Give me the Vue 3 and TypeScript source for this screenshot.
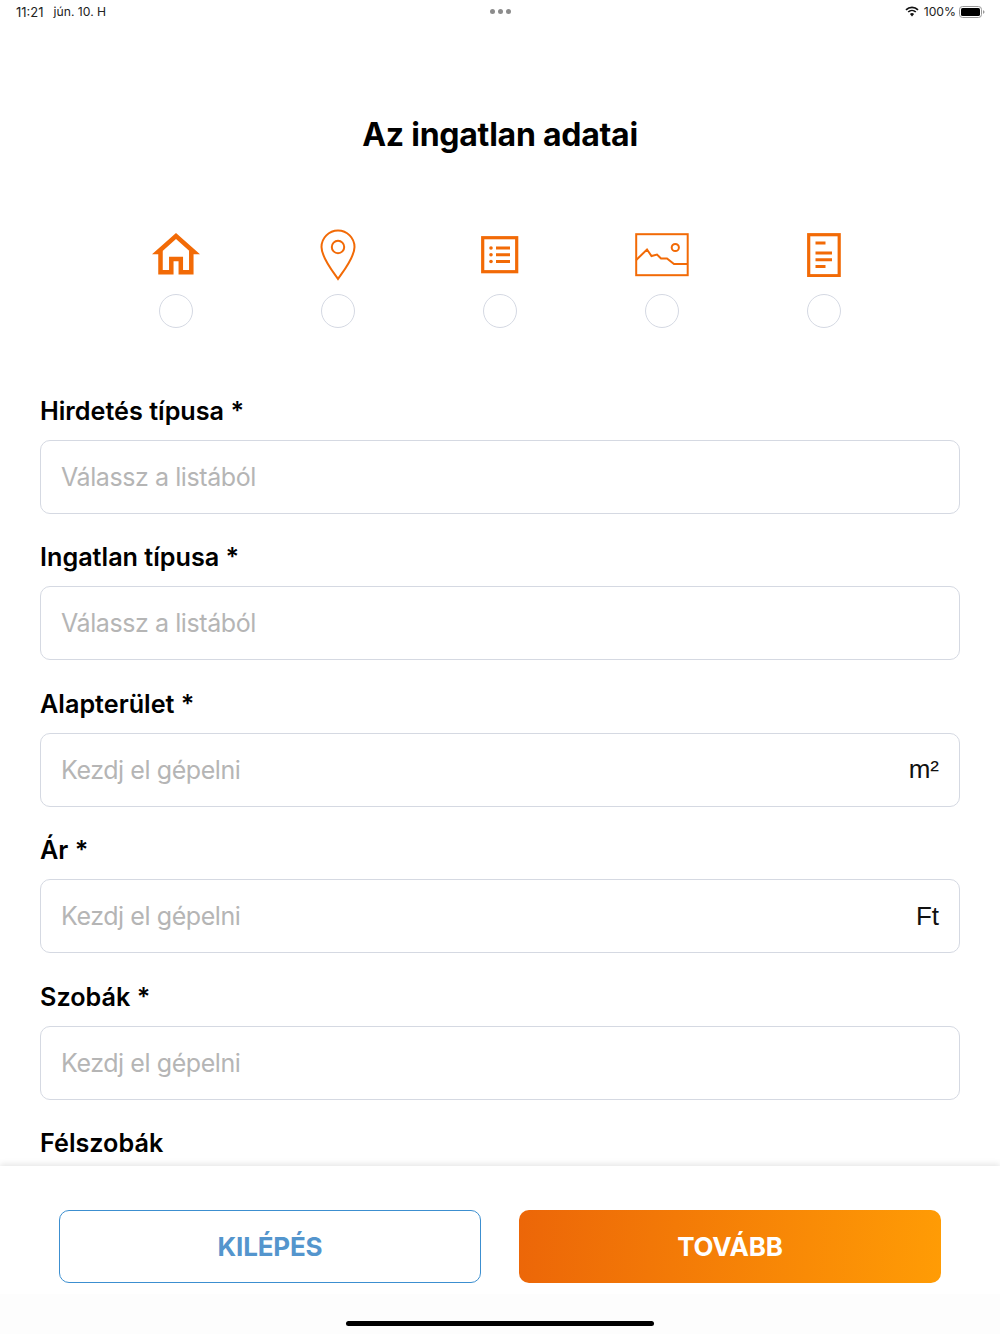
<template>
  <div class="page">
    <div class="status-bar">
      <div class="status-left">
        <span class="time">11:21</span>
        <span>jún. 10. H</span>
      </div>
      <div class="status-dots"><i></i><i></i><i></i></div>
      <div class="status-right">
        <svg class="wifi" width="14" height="11" viewBox="0 0 14 11">
          <path d="M1 3.8 A8.6 8.6 0 0 1 13 3.8" fill="none" stroke="#111" stroke-width="1.7" />
          <path d="M3.2 6 A5.5 5.5 0 0 1 10.8 6" fill="none" stroke="#111" stroke-width="1.7" />
          <path d="M7 10.6 L4.9 8.1 A3 3 0 0 1 9.1 8.1 Z" fill="#111" />
        </svg>
        <span class="percent">100%</span>
        <svg class="battery" width="26" height="12" viewBox="0 0 26 12">
          <rect x="0.5" y="0.5" width="22" height="11" rx="3" fill="none" stroke="#999" />
          <rect x="2" y="2" width="19" height="8" rx="1.6" fill="#000" />
          <path d="M24 4.2 C25 4.5 25.5 5.2 25.5 6 C25.5 6.8 25 7.5 24 7.8 Z" fill="#999" />
        </svg>
      </div>
    </div>

    <div class="scroll">
      <h1 class="title">Az ingatlan adatai</h1>

      <div class="steps">
        <div v-for="n in 5" :key="n" class="step">
          <div class="step-icon">
            <svg v-if="n === 1" class="home" width="48" height="42" viewBox="0 0 48 42" fill="none" stroke="#f26a06" stroke-width="4.5">
              <path d="M24 0 L48 21.3 H41 L24 6 L7 21.3 H0 Z" fill="#f26a06" stroke="none" />
              <path d="M8.5 18 V39.3 H19.3 V26 H28.8 V39.3 H39.3 V18" />
            </svg>
            <svg v-else-if="n === 2" width="36" height="52" viewBox="0 0 36 52" fill="none" stroke="#f26a06" stroke-width="2">
              <path d="M18 50 C14 44 1.5 29 1.5 18 A16.5 16.5 0 0 1 34.5 18 C34.5 29 22 44 18 50 Z" />
              <circle cx="18" cy="18" r="6.2" />
            </svg>
            <svg v-else-if="n === 3" width="38" height="38" viewBox="0 0 38 38" fill="none" stroke="#f26a06">
              <rect x="1.7" y="1.7" width="34" height="34" stroke-width="3.2" />
              <path d="M15 12 H29 M15 18.8 H29 M15 25.5 H29" stroke-width="3" />
              <circle cx="10" cy="12" r="1.8" fill="#f26a06" stroke="none" />
              <circle cx="10" cy="18.8" r="1.8" fill="#f26a06" stroke="none" />
              <circle cx="10" cy="25.5" r="1.8" fill="#f26a06" stroke="none" />
            </svg>
            <svg v-else-if="n === 4" width="54" height="44" viewBox="0 0 54 44" fill="none" stroke="#f26a06" stroke-width="2">
              <rect x="1.2" y="1.2" width="51.5" height="41" />
              <path d="M1.2 27 L12 16.5 L16.5 23 L22 21.5 L26 25.5 L32 25.5 L39 31 H52.7" />
              <circle cx="40.3" cy="14.5" r="3.6" />
            </svg>
            <svg v-else width="34" height="44" viewBox="0 0 34 44" fill="none" stroke="#f26a06">
              <rect x="1.7" y="1.7" width="30.5" height="41" stroke-width="3.2" />
              <path d="M8.5 10 H18.5 M8.5 20 H25 M8.5 26.7 H25 M8.5 33.5 H18.5" stroke-width="3" />
            </svg>
          </div>
          <span class="step-dot"></span>
        </div>
      </div>

      <div class="form">
        <div v-for="field in fields" :key="field.label" class="field">
          <label class="label">{{ field.label }}</label>
          <div v-if="field.placeholder" class="input">
            <span class="placeholder">{{ field.placeholder }}</span>
            <span v-if="field.unit" class="unit">{{ field.unit }}</span>
          </div>
        </div>
      </div>
    </div>

    <div class="footer">
      <div class="buttons">
        <button class="btn btn-exit">KILÉPÉS</button>
        <button class="btn btn-next">TOVÁBB</button>
      </div>
      <div class="home-area"><span class="home-bar"></span></div>
    </div>
  </div>
</template>

<script setup lang="ts">
interface IField {
  label: string
  placeholder?: string
  unit?: string
}

const fields: IField[] = [
  { label: 'Hirdetés típusa *', placeholder: 'Válassz a listából' },
  { label: 'Ingatlan típusa *', placeholder: 'Válassz a listából' },
  { label: 'Alapterület *', placeholder: 'Kezdj el gépelni', unit: 'm²' },
  { label: 'Ár *', placeholder: 'Kezdj el gépelni', unit: 'Ft' },
  { label: 'Szobák *', placeholder: 'Kezdj el gépelni' },
  { label: 'Félszobák' },
]
</script>

<style>
html,
body {
  margin: 0;
  background: #fff;
}
</style>

<style scoped>
.page {
  width: 1000px;
  height: 1334px;
  display: flex;
  flex-direction: column;
  overflow: hidden;
  background: #fff;
  font-family: Inter, 'Liberation Sans', sans-serif;
  color: #000;
}
.status-bar {
  height: 23px;
  flex: none;
  display: grid;
  grid-template-columns: 1fr auto 1fr;
  align-items: center;
  padding: 0 15px 0 16px;
  font-size: 12.2px;
  color: #222;
}
.status-left {
  display: flex;
  gap: 10px;
}
.time {
  font-size: 13px;
}
.status-dots {
  display: flex;
  gap: 3px;
}
.status-dots i {
  width: 5px;
  height: 5px;
  border-radius: 50%;
  background: #8c8c8c;
}
.status-right {
  display: flex;
  align-items: center;
  justify-content: flex-end;
  gap: 4px;
}
.percent {
  font-size: 12.2px;
  margin-right: -1px;
  margin-left: 1px;
}
.wifi {
  margin-right: 0;
}
.scroll {
  flex: 1;
  min-height: 0;
  overflow: hidden;
}
.title {
  margin: 92px 0 0;
  font-size: 32px;
  line-height: 40px;
  font-weight: 700;
  letter-spacing: -0.25px;
  text-align: center;
}
.steps {
  margin-top: 75px;
  padding: 0 95px;
  display: grid;
  grid-template-columns: repeat(5, 1fr);
}
.step {
  display: flex;
  flex-direction: column;
  align-items: center;
  gap: 14px;
}
.step-icon {
  height: 50px;
  display: flex;
  align-items: center;
  justify-content: center;
}
.home {
  margin-left: -1px;
  margin-bottom: 2px;
}
.step-dot {
  width: 34px;
  height: 34px;
  box-sizing: border-box;
  border: 1.2px solid #d5d9e3;
  border-radius: 50%;
}
.form {
  margin-top: 67px;
  padding: 0 40px;
}
.field {
  margin-bottom: 27.4px;
}
.label {
  display: block;
  font-size: 25.2px;
  line-height: 32px;
  font-weight: 600;
  margin-bottom: 13px;
}
.input {
  height: 74px;
  box-sizing: border-box;
  border: 1px solid #d5d9e2;
  border-radius: 10px;
  padding: 0 20px;
  display: flex;
  align-items: center;
  justify-content: space-between;
  font-size: 25px;
}
.placeholder {
  color: #b5b5b5;
  letter-spacing: -0.42px;
}
.unit {
  color: #111;
  font-family: 'Liberation Sans', sans-serif;
  font-size: 26px;
}
.footer {
  flex: none;
  height: 168px;
  box-sizing: border-box;
  padding-top: 44px;
  background: #fff;
  box-shadow: 0 -2px 6px rgba(0, 0, 0, 0.1);
  position: relative;
}
.buttons {
  padding: 0 59px;
  display: grid;
  grid-template-columns: 1fr 1fr;
  gap: 38px;
}
.btn {
  height: 73px;
  box-sizing: border-box;
  border-radius: 10px;
  font-family: inherit;
  font-size: 26px;
  font-weight: 700;
  letter-spacing: -0.2px;
}
.btn-exit {
  background: #fff;
  border: 1.5px solid #3c8fd0;
  color: #5495cd;
}
.btn-next {
  border: none;
  background: linear-gradient(95deg, #ec6608, #ff9c05);
  color: #fff;
}
.home-area {
  margin-top: 11px;
  height: 40px;
  padding-top: 27px;
  box-sizing: border-box;
  background: #fdfdfd;
  display: flex;
  justify-content: center;
}
.home-bar {
  width: 308px;
  height: 5px;
  border-radius: 3px;
  background: #000;
}
</style>
